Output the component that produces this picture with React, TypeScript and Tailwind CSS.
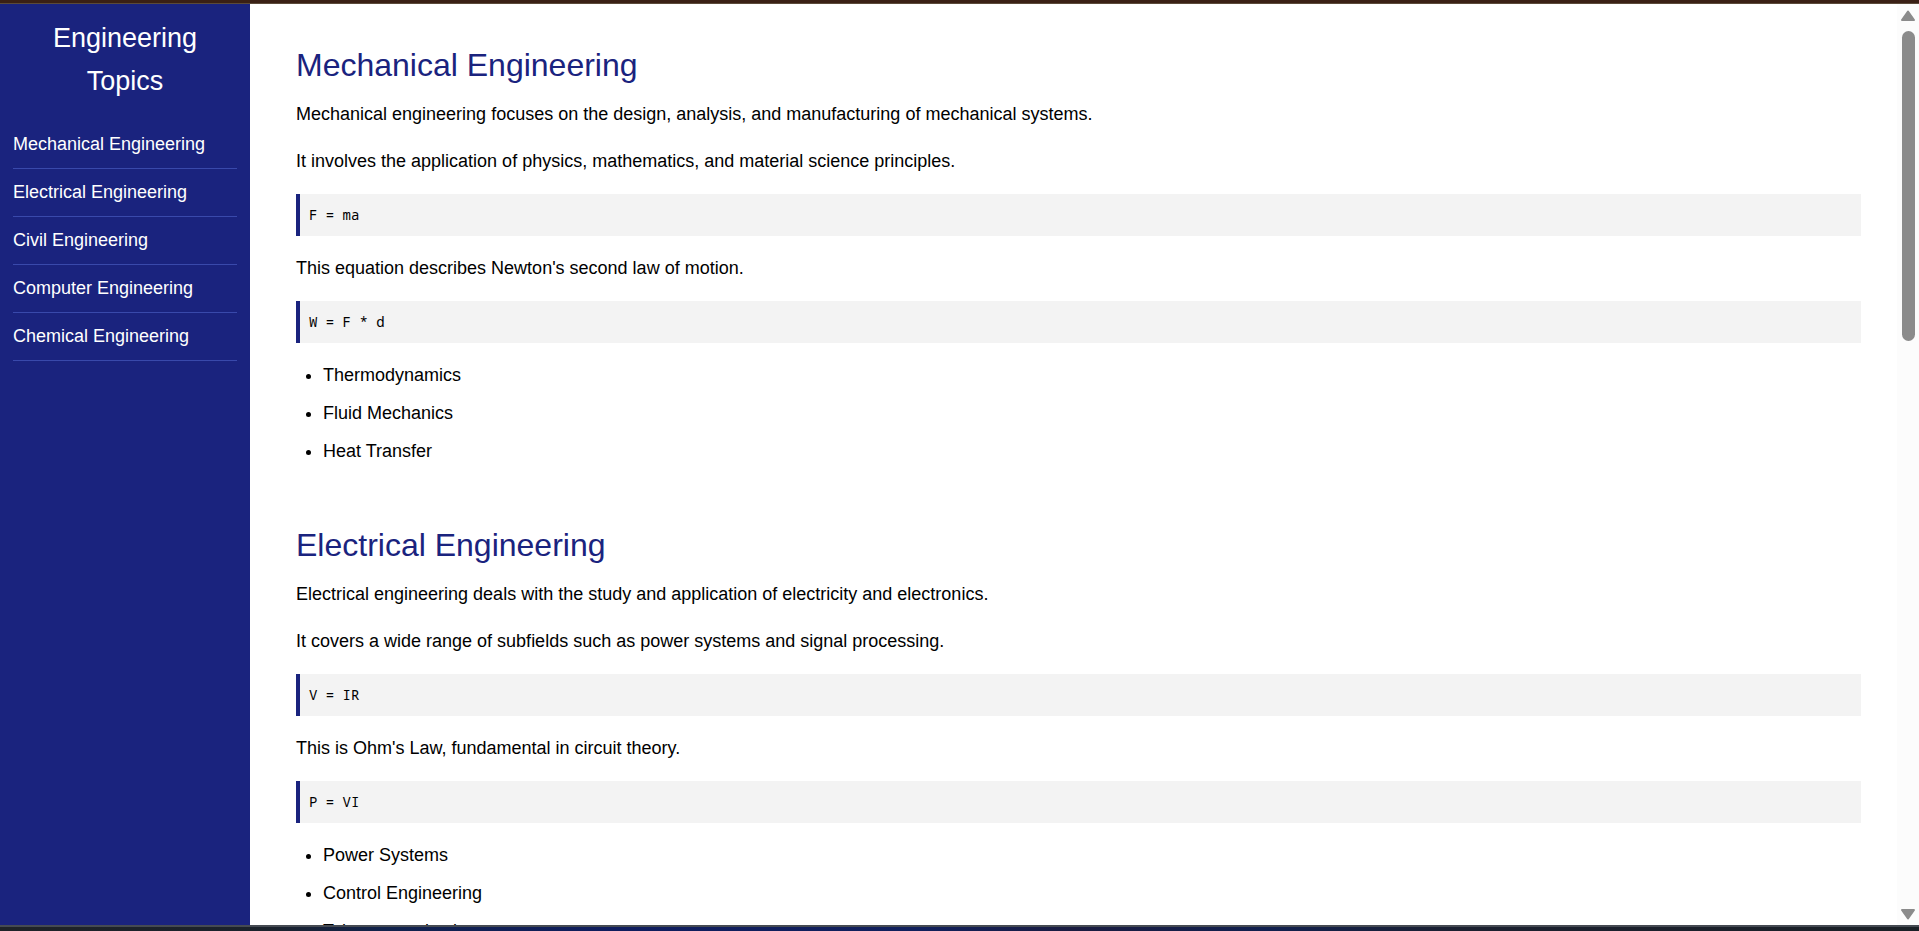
type Block =
  | { kind: "text"; value: string }
  | { kind: "formula"; value: string }
  | { kind: "list"; items: string[] };

type Topic = { id: string; title: string; blocks: Block[] };

const links = [
  { id: "mechanical", label: "Mechanical Engineering" },
  { id: "electrical", label: "Electrical Engineering" },
  { id: "civil", label: "Civil Engineering" },
  { id: "computer", label: "Computer Engineering" },
  { id: "chemical", label: "Chemical Engineering" },
];

const topics: Topic[] = [
  {
    id: "mechanical",
    title: "Mechanical Engineering",
    blocks: [
      { kind: "text", value: "Mechanical engineering focuses on the design, analysis, and manufacturing of mechanical systems." },
      { kind: "text", value: "It involves the application of physics, mathematics, and material science principles." },
      { kind: "formula", value: "F = ma" },
      { kind: "text", value: "This equation describes Newton's second law of motion." },
      { kind: "formula", value: "W = F * d" },
      { kind: "list", items: ["Thermodynamics", "Fluid Mechanics", "Heat Transfer"] },
    ],
  },
  {
    id: "electrical",
    title: "Electrical Engineering",
    blocks: [
      { kind: "text", value: "Electrical engineering deals with the study and application of electricity and electronics." },
      { kind: "text", value: "It covers a wide range of subfields such as power systems and signal processing." },
      { kind: "formula", value: "V = IR" },
      { kind: "text", value: "This is Ohm's Law, fundamental in circuit theory." },
      { kind: "formula", value: "P = VI" },
      { kind: "list", items: ["Power Systems", "Control Engineering", "Telecommunications"] },
    ],
  },
];

function BlockView({ block }: { block: Block }) {
  if (block.kind === "text") return <p>{block.value}</p>;
  if (block.kind === "formula") {
    return (
      <code className="block border-l-4 border-[#1a237e] bg-[#f3f3f3] p-[9px] font-['Noto_Sans_Mono','DejaVu_Sans_Mono',monospace] text-[14px] leading-6">
        {block.value}
      </code>
    );
  }
  return (
    <ul className="flex list-disc flex-col gap-[9px] pl-[27px]">
      {block.items.map((item) => (
        <li key={item}>{item}</li>
      ))}
    </ul>
  );
}

function Sidebar() {
  return (
    <nav className="w-[250px] shrink-0 bg-[#1a237e] p-[13px] text-white">
      <h2 className="mb-[18px] text-center text-[27px] leading-[43px]">Engineering Topics</h2>
      <ul>
        {links.map((link) => (
          <li key={link.id} className="border-b border-[#3949ab]">
            <a href={`#${link.id}`} className="block py-[9px]">
              {link.label}
            </a>
          </li>
        ))}
      </ul>
    </nav>
  );
}

function ScrollRail() {
  return (
    <div aria-hidden="true" className="flex w-[22px] shrink-0 flex-col items-center bg-[#fcfcfc] pt-[5px] pb-1">
      <svg className="h-[14px] w-[16px] shrink-0" viewBox="0 0 16 14">
        <path d="M8 2.500 L14 11 H2 Z" fill="#8b8b8b" stroke="#8b8b8b" strokeWidth="2" strokeLinejoin="round" />
      </svg>
      <div className="mt-2 h-[34%] w-[13px] rounded-full bg-[#8b8b8b]" />
      <svg className="mt-auto h-[14px] w-[16px] shrink-0" viewBox="0 0 16 14">
        <path d="M8 11.500 L14 3 H2 Z" fill="#8b8b8b" stroke="#8b8b8b" strokeWidth="2" strokeLinejoin="round" />
      </svg>
    </div>
  );
}

export default function App() {
  return (
    <div className="flex h-screen flex-col overflow-hidden bg-white font-['Liberation_Sans',Arial,sans-serif] text-[18px] leading-[29px] text-black">
      <div className="h-1 shrink-0 border-b border-[#5b4a3a] bg-[#3a2015]" />
      <div className="flex min-h-0 grow">
        <Sidebar />
        <main className="flex min-w-0 grow flex-col gap-[54px] overflow-y-auto pt-9 pr-9 pl-[46px] [scrollbar-width:none]">
          {topics.map((topic) => (
            <section key={topic.id} id={topic.id}>
              <h1 className="mb-[9px] text-[32px] leading-[51px] text-[#1a237e]">{topic.title}</h1>
              <div className="flex flex-col gap-[18px]">
                {topic.blocks.map((block, index) => (
                  <BlockView key={index} block={block} />
                ))}
              </div>
            </section>
          ))}
        </main>
        <ScrollRail />
      </div>
      <div className="h-[6px] shrink-0 border-t-2 border-[#454a52] bg-[linear-gradient(to_right,#1f2328_0%,#1b222c_14%,#11224c_20%,#0f1d5e_32%,#11205c_48%,#1a1c40_56%,#11204f_66%,#1b2030_76%,#1a2026_100%)]" />
    </div>
  );
}
